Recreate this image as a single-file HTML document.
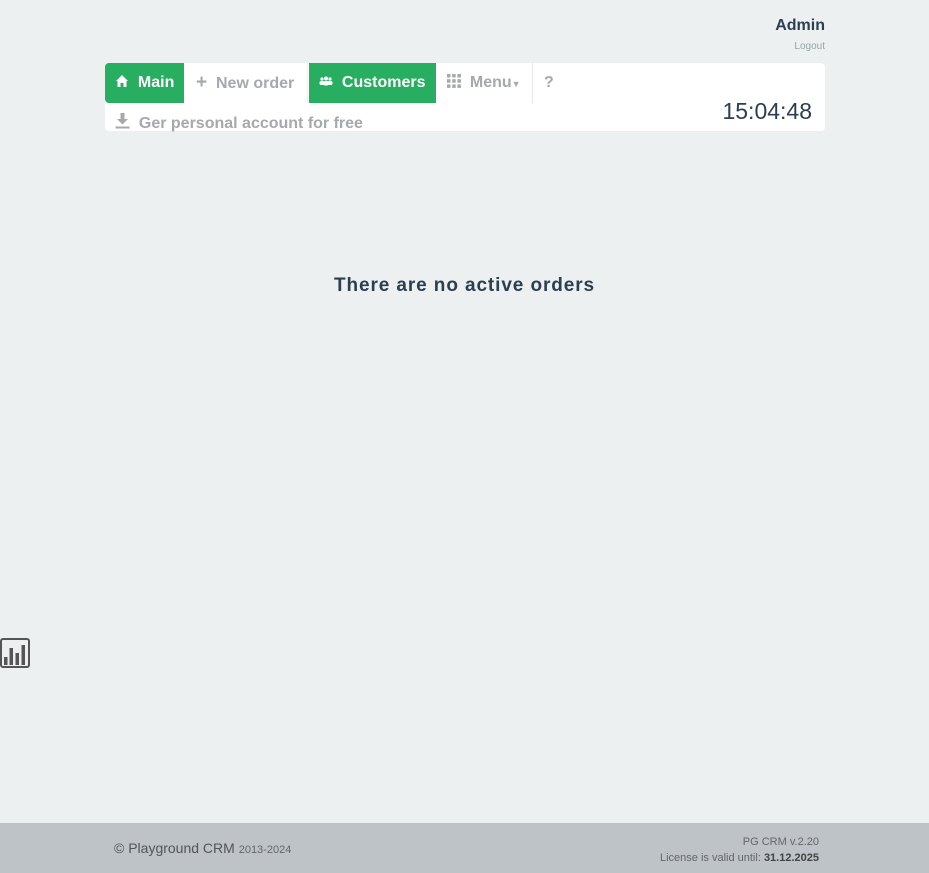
<!DOCTYPE html>
<html><head><style>
body{margin:0;width:929px;height:873px;background:#ecf0f1;font-family:"Liberation Sans",sans-serif;position:relative;overflow:hidden}
.a{position:absolute}
.nav{position:absolute;top:63px;height:40px;line-height:40px;font-size:16px;font-weight:bold;color:#a4a9ad;box-sizing:border-box}
.g{background:#27ae60;color:#fff}
</style></head><body>
<div class="a" style="right:104px;top:17px;font-size:16px;font-weight:bold;color:#2c3e50">Admin</div>
<div class="a" style="right:104px;top:41px;font-size:10px;color:#95a5a6">Logout</div>
<div class="a" style="left:105px;top:63px;width:720px;height:68px;background:#fff;border-radius:4px"></div>
<div class="nav g" style="left:105px;width:79px;border-radius:4px 0 0 4px;padding-left:10px">
<svg width="14" height="14" viewBox="0 0 14 14" style="vertical-align:-1px"><path d="M7 1 L13 7 H11.5 V13 H8.5 V9 H5.5 V13 H2.5 V7 H1Z" fill="#fff"/></svg>&nbsp; Main</div>
<div class="nav" style="left:184px;width:124px;padding-left:12px;border-right:1px solid #eef0f1"><span style="font-size:19px">+</span>&nbsp; New order</div>
<div class="nav g" style="left:309px;width:127px;padding-left:10px">
<svg width="14" height="10" viewBox="0 0 14 10" style="vertical-align:1px"><circle cx="3" cy="3" r="1.6" fill="#fff"/><circle cx="7" cy="2.5" r="2" fill="#fff"/><circle cx="11" cy="3" r="1.6" fill="#fff"/><rect x="0.5" y="5" width="5" height="4" rx="1.5" fill="#fff"/><rect x="4.5" y="5" width="5" height="4.5" rx="1.5" fill="#fff"/><rect x="8.5" y="5" width="5" height="4" rx="1.5" fill="#fff"/></svg>&nbsp; Customers</div>
<div class="nav" style="left:436px;width:97px;padding-left:11px;border-right:1px solid #e6e9ea">
<svg width="14" height="14" viewBox="0 0 14 14" style="vertical-align:-1px" fill="#a4a9ad"><rect x="0" y="0" width="3.5" height="3.5"/><rect x="5.2" y="0" width="3.5" height="3.5"/><rect x="10.4" y="0" width="3.5" height="3.5"/><rect x="0" y="5.2" width="3.5" height="3.5"/><rect x="5.2" y="5.2" width="3.5" height="3.5"/><rect x="10.4" y="5.2" width="3.5" height="3.5"/><rect x="0" y="10.4" width="3.5" height="3.5"/><rect x="5.2" y="10.4" width="3.5" height="3.5"/><rect x="10.4" y="10.4" width="3.5" height="3.5"/></svg>&nbsp; Menu<span style="font-size:9px">▼</span></div>
<div class="nav" style="left:544px">?</div>
<div class="a" style="left:115px;top:113px;font-size:16px;font-weight:bold;color:#a4a9ad">
<svg width="15" height="16" viewBox="0 0 15 16" style="vertical-align:-1px" fill="#a4a9ad"><rect x="5.5" y="0" width="4" height="6"/><path d="M2 6 H13 L7.5 11.5Z"/><rect x="0.5" y="13.5" width="14" height="2"/></svg>&nbsp; Ger personal account for free</div>
<div class="a" style="right:117px;top:98px;font-size:23px;color:#2c3e50">15:04:48</div>
<div class="a" style="left:0;width:929px;top:275px;text-align:center;font-size:19px;font-weight:bold;color:#2c3e50;letter-spacing:0.9px">There are no active orders</div>
<svg class="a" style="left:0;top:638px" width="31" height="30" viewBox="0 0 31 30"><rect x="1" y="1" width="28" height="28" rx="2" fill="none" stroke="#555" stroke-width="2"/><rect x="4" y="19" width="3.5" height="8" fill="#555"/><rect x="9.5" y="10" width="3.5" height="17" fill="#555"/><rect x="15.5" y="15" width="3.5" height="12" fill="#555"/><rect x="21.5" y="7" width="3.5" height="20" fill="#555"/></svg>
<div class="a" style="left:0;top:823px;width:929px;height:50px;background:#bdc3c7"></div>
<div class="a" style="left:114px;top:840px;font-size:14px;color:#555">© Playground CRM <span style="font-size:11px;color:#666">2013-2024</span></div>
<div class="a" style="right:110px;top:834px;font-size:11px;color:#666;text-align:right;line-height:16px">PG CRM v.2.20<br>License is valid until: <b style="color:#444">31.12.2025</b></div>
</body></html>
